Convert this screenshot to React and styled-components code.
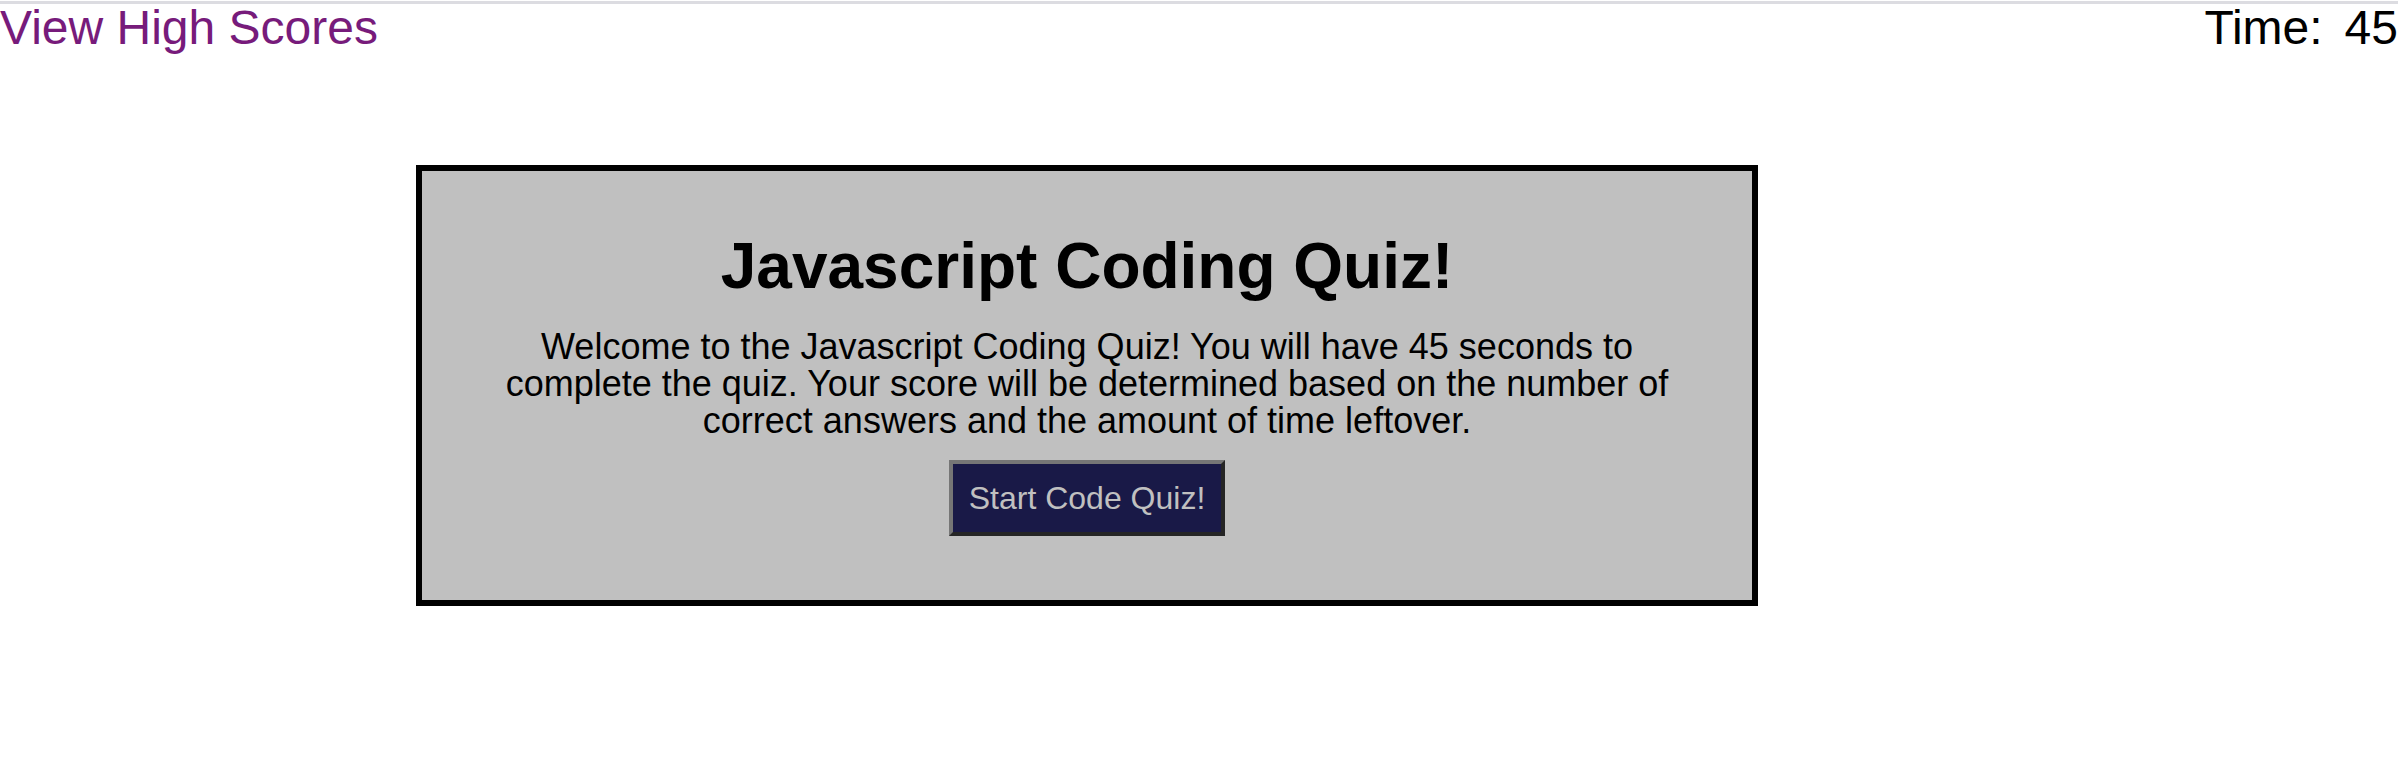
import styled, { createGlobalStyle } from "styled-components";

const GlobalStyle = createGlobalStyle`
  body {
    margin: 0;
    font-family: "Liberation Sans", Arial, Helvetica, sans-serif;
    background: linear-gradient(#dcdce1, #dcdce1) 0 1px / 100% 3px no-repeat, #fff;
  }
`;

export default function App() {
  return (
    <>
      <GlobalStyle />
      {/* 상단 바 */}
      <Header>
        <ScoresLink href="#">View High Scores</ScoresLink>
        <Timer>
          Time:<Seconds>45</Seconds>
        </Timer>
      </Header>

      {/* 시작 카드 */}
      <QuizCard>
        <Title>Javascript Coding Quiz!</Title>
        <Intro>
          Welcome to the Javascript Coding Quiz! You will have 45 seconds to
          complete the quiz. Your score will be determined based on the number
          of correct answers and the amount of time leftover.
        </Intro>
        <StartButton>Start Code Quiz!</StartButton>
      </QuizCard>
    </>
  );
}

// Styled Components
const Header = styled.header`
  display: flex;
  justify-content: space-between;
  align-items: flex-start;
  font-size: 48px;
  line-height: normal;
`;

const ScoresLink = styled.a`
  color: #771b7b;
  text-decoration: none;
`;

const Timer = styled.div`
  color: #000;
`;

const Seconds = styled.span`
  margin-left: 22px;
`;

const QuizCard = styled.section`
  box-sizing: border-box;
  width: 1342px;
  margin: 110px 0 0 416px;
  padding: 58px 0 64px;
  border: 6px solid #000;
  background: #c0c0c0;
  display: flex;
  flex-direction: column;
  align-items: center;
  text-align: center;
`;

const Title = styled.h1`
  margin: 0;
  font-size: 64px;
  font-weight: 700;
  line-height: normal;
  color: #000;
`;

const Intro = styled.p`
  max-width: 1190px;
  margin: 25px 0 0;
  font-size: 36px;
  line-height: 37px;
  color: #000;
`;

const StartButton = styled.button`
  margin-top: 21px;
  padding: 15.5px 16px;
  font-family: inherit;
  font-size: 32px;
  line-height: normal;
  color: #c0c0c0;
  background: #191947;
  border: 4px solid;
  border-color: #767676 #252525 #252525 #767676;
  cursor: pointer;
`;
